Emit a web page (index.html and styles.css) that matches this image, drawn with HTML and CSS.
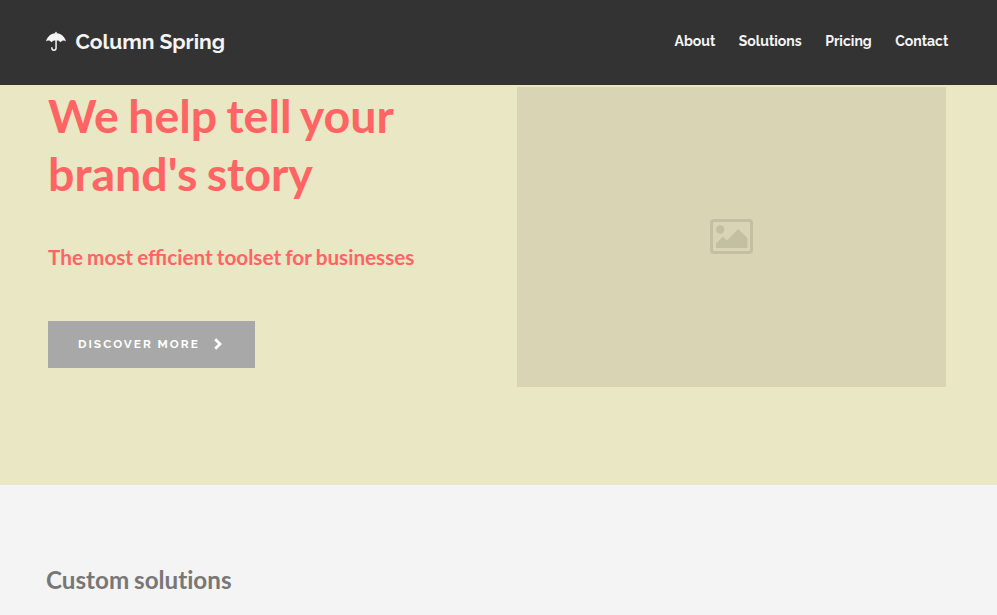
FILE: index.html
```html
<!DOCTYPE html>
<html lang="en">
<head>
<meta charset="utf-8">
<title>Column Spring</title>
<link rel="stylesheet" href="styles.css">
</head>
<body>
<header class="header">
  <a class="brand"><svg class="umbrella" viewBox="0 0 20 20"><path d="M9.200 2.200V1.500a.8.8 0 0 1 1.600 0v.7c4.600.2 8 3.600 9.200 8.300-2-1.500-3.900-1-5.500.7-1.300-1.500-2.500-1.800-3.700-1.700v7.600a2.850 2.850 0 0 1-5.700 0v-.8h1.500v.8a1.350 1.350 0 0 0 2.700 0V9.500c-1.200 0-2.400.2-3.700 1.700C3.900 9.500 2 9 0 10.500c1.200-4.700 4.600-8.100 9.200-8.300z"/></svg><span>Column Spring</span></a>
  <nav class="nav"><a>About</a><a>Solutions</a><a>Pricing</a><a>Contact</a></nav>
</header>
<main>
  <section class="hero">
    <div class="copy">
      <h1>We help tell your brand's story</h1>
      <p class="lead">The most efficient toolset for businesses</p>
      <a class="button"><span>Discover more</span><svg class="chevron" viewBox="0 0 8 12"><path d="M1.200 1.200 6 6l-4.800 4.800"/></svg></a>
    </div>
    <div class="placeholder"><svg class="picture" viewBox="0 0 43 35"><rect class="frame" x="1.500" y="1.500" width="40" height="32" rx="2.500"/><circle cx="10.200" cy="10.500" r="4.200"/><path d="M6 29v-4.500l7-7 4 4L28 10l9.500 9v10z"/></svg></div>
  </section>
  <section class="solutions"><h2>Custom solutions</h2></section>
</main>
</body>
</html>
```
FILE: styles.css
```css
* { box-sizing: border-box; }
body { margin: 0; font-family: Lato, sans-serif; background: #f4f4f4; }
h1, h2, p { margin: 0; }
.header { height: 85px; background: #333; color: #f4f4f4; display: flex; align-items: center; justify-content: space-between; padding: 0 48.600px 3px 46px; font-family: Raleway, "Open Sans", sans-serif; font-weight: 700; }
.brand { display: flex; align-items: center; gap: 9.500px; font-size: 21px; }
.umbrella { width: 20px; height: 20px; fill: currentColor; }
.nav { display: flex; gap: 23.500px; font-size: 14px; }
.hero { height: 400px; background: #e9e7c4; display: flex; justify-content: space-between; padding: 2px 51px 0 48px; }
.copy { width: 400px; margin-top: -1px; color: #ff6464; }
h1 { font-size: 46.500px; line-height: 58px; font-weight: 700; word-spacing: -2px; }
.lead { margin-top: 42px; font-size: 20.700px; line-height: 26px; font-weight: 700; word-spacing: -.9px; }
.button { margin-top: 51px; width: 207px; height: 47px; background: #a8a8a8; color: #fff; display: flex; align-items: center; padding: 0 0 2px 30px; gap: 14px; font: 700 11.850px Raleway, sans-serif; letter-spacing: 2px; text-transform: uppercase; }
.chevron { width: 8px; height: 12px; fill: none; stroke: currentColor; stroke-width: 2.800; }
.placeholder { width: 429px; height: 300px; background: #d8d4b4; display: flex; align-items: center; justify-content: center; padding-bottom: 2px; }
.picture { width: 43px; height: 35px; fill: #c3c0a2; }
.frame { fill: none; stroke: #c3c0a2; stroke-width: 3; }
.solutions { padding: 80px 46px 0; color: #777; }
h2 { font-size: 24.200px; line-height: 30px; font-weight: 700; font-variant-ligatures: none; word-spacing: -1px; }
```
